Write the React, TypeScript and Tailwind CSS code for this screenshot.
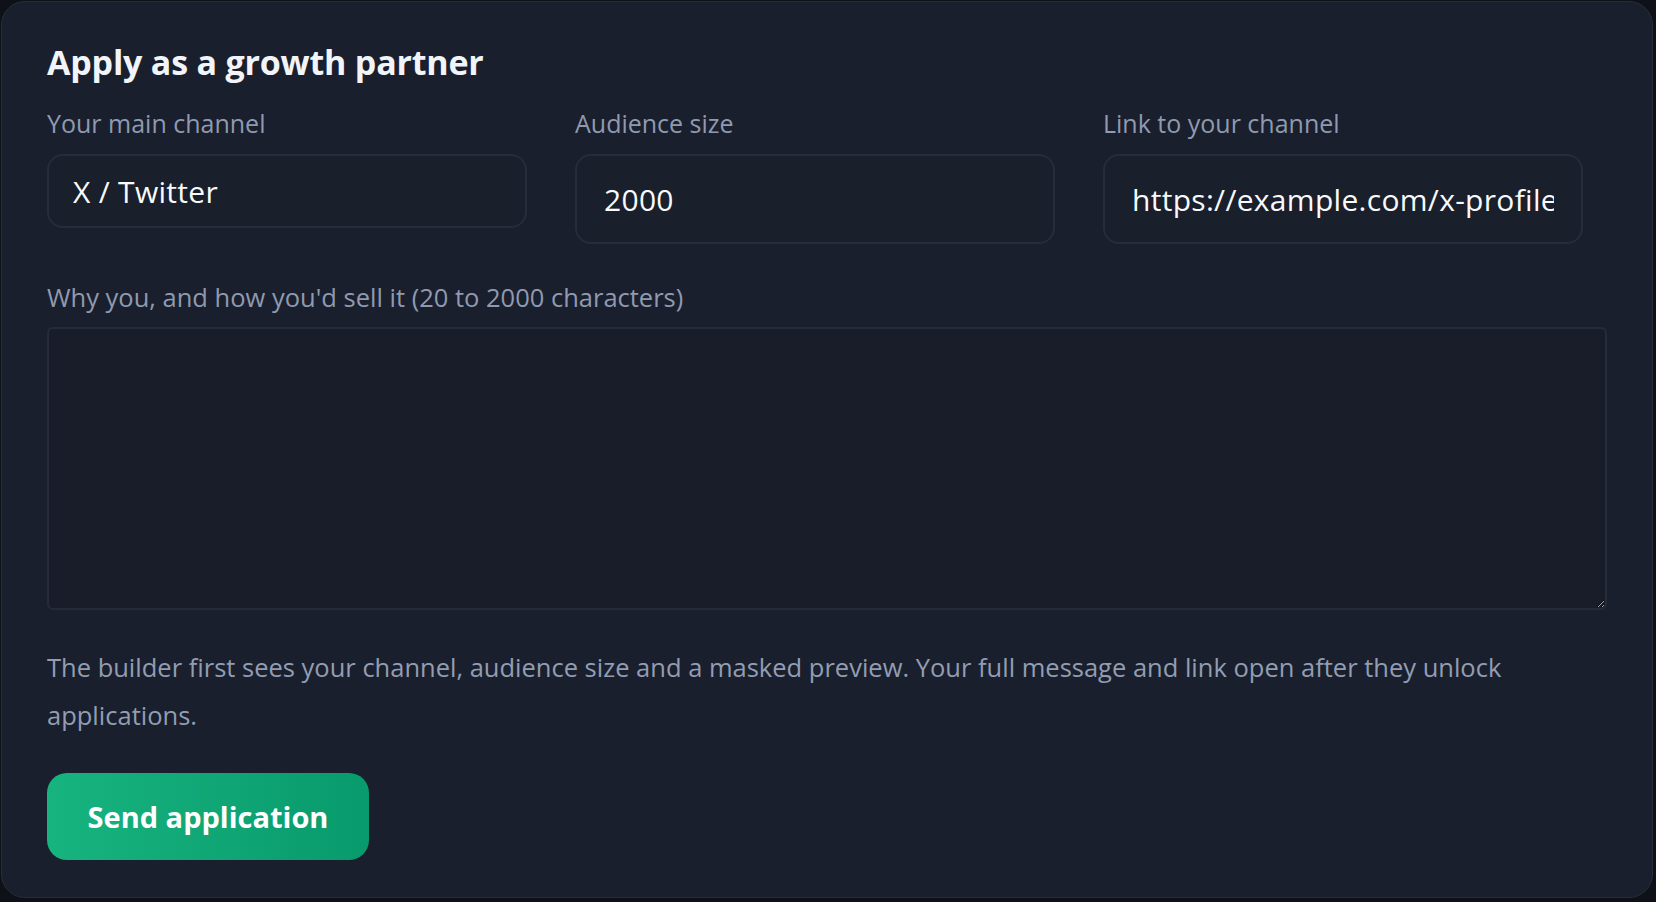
import React from "react";

const font = { fontFamily: "'Open Sans', 'Noto Sans', sans-serif" };

export default function App() {
  return (
    <div
      className="min-h-screen w-full bg-[#0e1118] p-px"
      style={font}
    >
      <div className="h-[897px] w-[1652px] rounded-[24px] border border-[#272d3a] bg-[#1a1f2d] px-[45px] pt-[40px]">
        <h2 className="text-[34px] font-bold leading-[40px] tracking-[-0.2px] text-[#f1f5f9]">
          Apply as a growth partner
        </h2>

        {/* three fields row */}
        <div className="mt-[25px] grid grid-cols-3 items-start gap-x-12 pr-6">
          <div>
            <label className="block text-[25px] leading-[32px] text-[#8f9ab0]">
              Your main channel
            </label>
            <input
              readOnly
              defaultValue="X / Twitter"
              className="mt-[15px] h-[74px] w-full rounded-[16px] border-2 border-[#262c3a] bg-[#1a1f2c] px-[24px] text-[30px] tracking-[0.3px] text-[#f8fafc] outline-none"
            />
          </div>
          <div>
            <label className="block text-[25px] leading-[32px] text-[#8f9ab0]">
              Audience size
            </label>
            <input
              readOnly
              defaultValue="2000"
              className="mt-[15px] h-[90px] w-full rounded-[16px] border-2 border-[#262c3a] bg-[#1a1f2c] px-[27px] text-[30px] tracking-[0.3px] text-[#f8fafc] outline-none"
            />
          </div>
          <div>
            <label className="block text-[25px] leading-[32px] text-[#8f9ab0]">
              Link to your channel
            </label>
            <input
              readOnly
              defaultValue="https://example.com/x-profile"
              className="mt-[15px] h-[90px] w-full rounded-[16px] border-2 border-[#262c3a] bg-[#1a1f2c] px-[27px] text-[30px] tracking-[0.3px] text-[#f8fafc] outline-none"
            />
          </div>
        </div>

        <label className="mt-[37px] block text-[25.5px] leading-[32px] text-[#8f9ab0]">
          Why you, and how you'd sell it (20 to 2000 characters)
        </label>
        <textarea className="mt-[14px] block h-[283px] w-full rounded-[6px] border-2 border-[#252b38] bg-[#181d29] p-4 text-[26px] text-[#f8fafc] outline-none" />

        <p className="mt-[33px] text-[25.5px] leading-[48px] text-[#929db2]">
          The builder first sees your channel, audience size and a masked
          preview. Your full message and link open after they unlock
          applications.
        </p>

        <button className="mt-[34px] h-[87px] w-[322px] rounded-[20px] bg-gradient-to-r from-[#17b47f] to-[#089a6c] text-[29px] font-bold text-white">
          Send application
        </button>
      </div>
    </div>
  );
}
